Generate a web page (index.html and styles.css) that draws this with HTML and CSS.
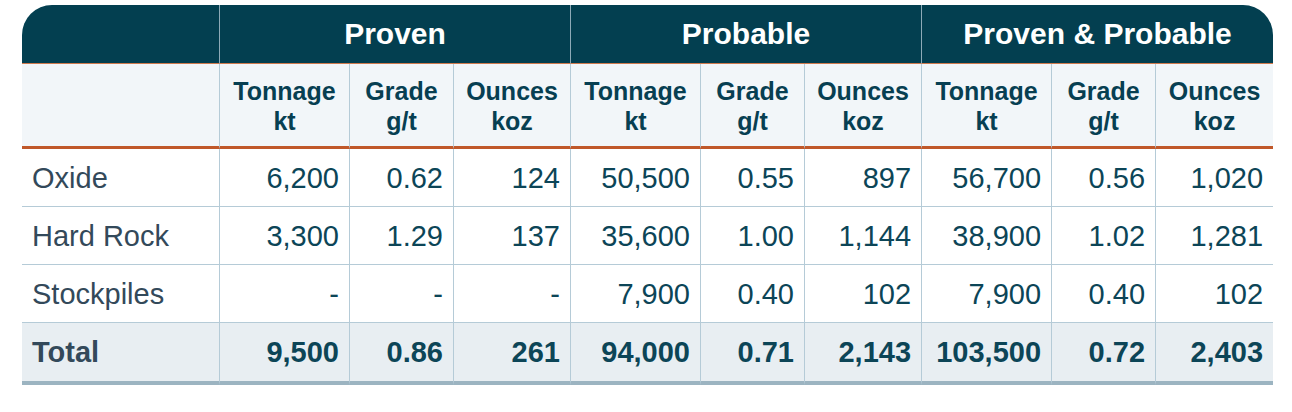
FILE: index.html
```html
<!DOCTYPE html>
<html lang="en">
<head>
<meta charset="utf-8">
<title>Ore Reserves</title>
<link rel="stylesheet" href="styles.css">
</head>
<body>
<table class="reserves">
  <colgroup>
    <col class="c-label">
    <col class="c-ton"><col class="c-grade"><col class="c-oz">
    <col class="c-ton"><col class="c-grade"><col class="c-oz">
    <col class="c-ton"><col class="c-grade"><col class="c-oz">
  </colgroup>
  <thead>
    <tr class="group-row">
      <th class="corner-l"></th>
      <th colspan="3">Proven</th>
      <th colspan="3">Probable</th>
      <th colspan="3" class="corner-r">Proven &amp; Probable</th>
    </tr>
    <tr class="unit-row">
      <th></th>
      <th>Tonnage<br>kt</th><th>Grade<br>g/t</th><th>Ounces<br>koz</th>
      <th>Tonnage<br>kt</th><th>Grade<br>g/t</th><th>Ounces<br>koz</th>
      <th>Tonnage<br>kt</th><th>Grade<br>g/t</th><th class="end">Ounces<br>koz</th>
    </tr>
  </thead>
  <tbody>
    <tr>
      <td class="label">Oxide</td>
      <td>6,200</td><td>0.62</td><td>124</td>
      <td>50,500</td><td>0.55</td><td>897</td>
      <td>56,700</td><td>0.56</td><td class="end">1,020</td>
    </tr>
    <tr>
      <td class="label">Hard Rock</td>
      <td>3,300</td><td>1.29</td><td>137</td>
      <td>35,600</td><td>1.00</td><td>1,144</td>
      <td>38,900</td><td>1.02</td><td class="end">1,281</td>
    </tr>
    <tr>
      <td class="label">Stockpiles</td>
      <td>-</td><td>-</td><td>-</td>
      <td>7,900</td><td>0.40</td><td>102</td>
      <td>7,900</td><td>0.40</td><td class="end">102</td>
    </tr>
  </tbody>
  <tfoot>
    <tr class="total-row">
      <td class="label">Total</td>
      <td>9,500</td><td>0.86</td><td>261</td>
      <td>94,000</td><td>0.71</td><td>2,143</td>
      <td>103,500</td><td>0.72</td><td class="end">2,403</td>
    </tr>
  </tfoot>
</table>
</body>
</html>
```

FILE: styles.css
```css
html, body {
  margin: 0;
  padding: 0;
  background: #ffffff;
}

body {
  padding: 5px 0 0 22px;
  font-family: "Liberation Sans", Arial, sans-serif;
}

.reserves {
  border-collapse: separate;
  border-spacing: 0;
  table-layout: fixed;
  width: 1251px;
}

.c-label { width: 198px; }
.c-ton { width: 130px; }
.c-grade { width: 104px; }
.c-oz { width: 117px; }

.reserves th,
.reserves td {
  padding: 0 10px;
  box-sizing: border-box;
}

/* group header */
.group-row th {
  height: 59px;
  background: #033f50;
  color: #ffffff;
  font-size: 30px;
  font-weight: bold;
  text-align: center;
  vertical-align: middle;
  border-bottom: 1px solid #cf7a4e;
  border-right: 1px solid #8eaab7;
}

.group-row th.corner-l {
  border-top-left-radius: 30px;
}

.group-row th.corner-r {
  border-top-right-radius: 30px;
  border-right: none;
}

/* units header */
.unit-row th {
  height: 85px;
  background: #f2f6f9;
  color: #073f52;
  font-size: 25px;
  line-height: 30px;
  font-weight: bold;
  text-align: center;
  vertical-align: middle;
  padding-top: 1px;
  border-bottom: 3px solid #c0582a;
  border-right: 1px solid #b5cbd7;
}

.unit-row th.end {
  border-right: none;
}

/* body */
.reserves td {
  height: 58px;
  font-size: 29px;
  color: #0c4557;
  text-align: right;
  vertical-align: middle;
  padding-top: 1px;
  border-right: 1px solid #b5cbd7;
  border-bottom: 1px solid #b5cbd7;
}

.reserves td.end {
  border-right: none;
}

.reserves td.label {
  text-align: left;
  color: #33495a;
}

.total-row td {
  height: 62px;
  background: #e8eef2;
  font-weight: bold;
  border-bottom: 4px solid #9cb4c1;
}
```
